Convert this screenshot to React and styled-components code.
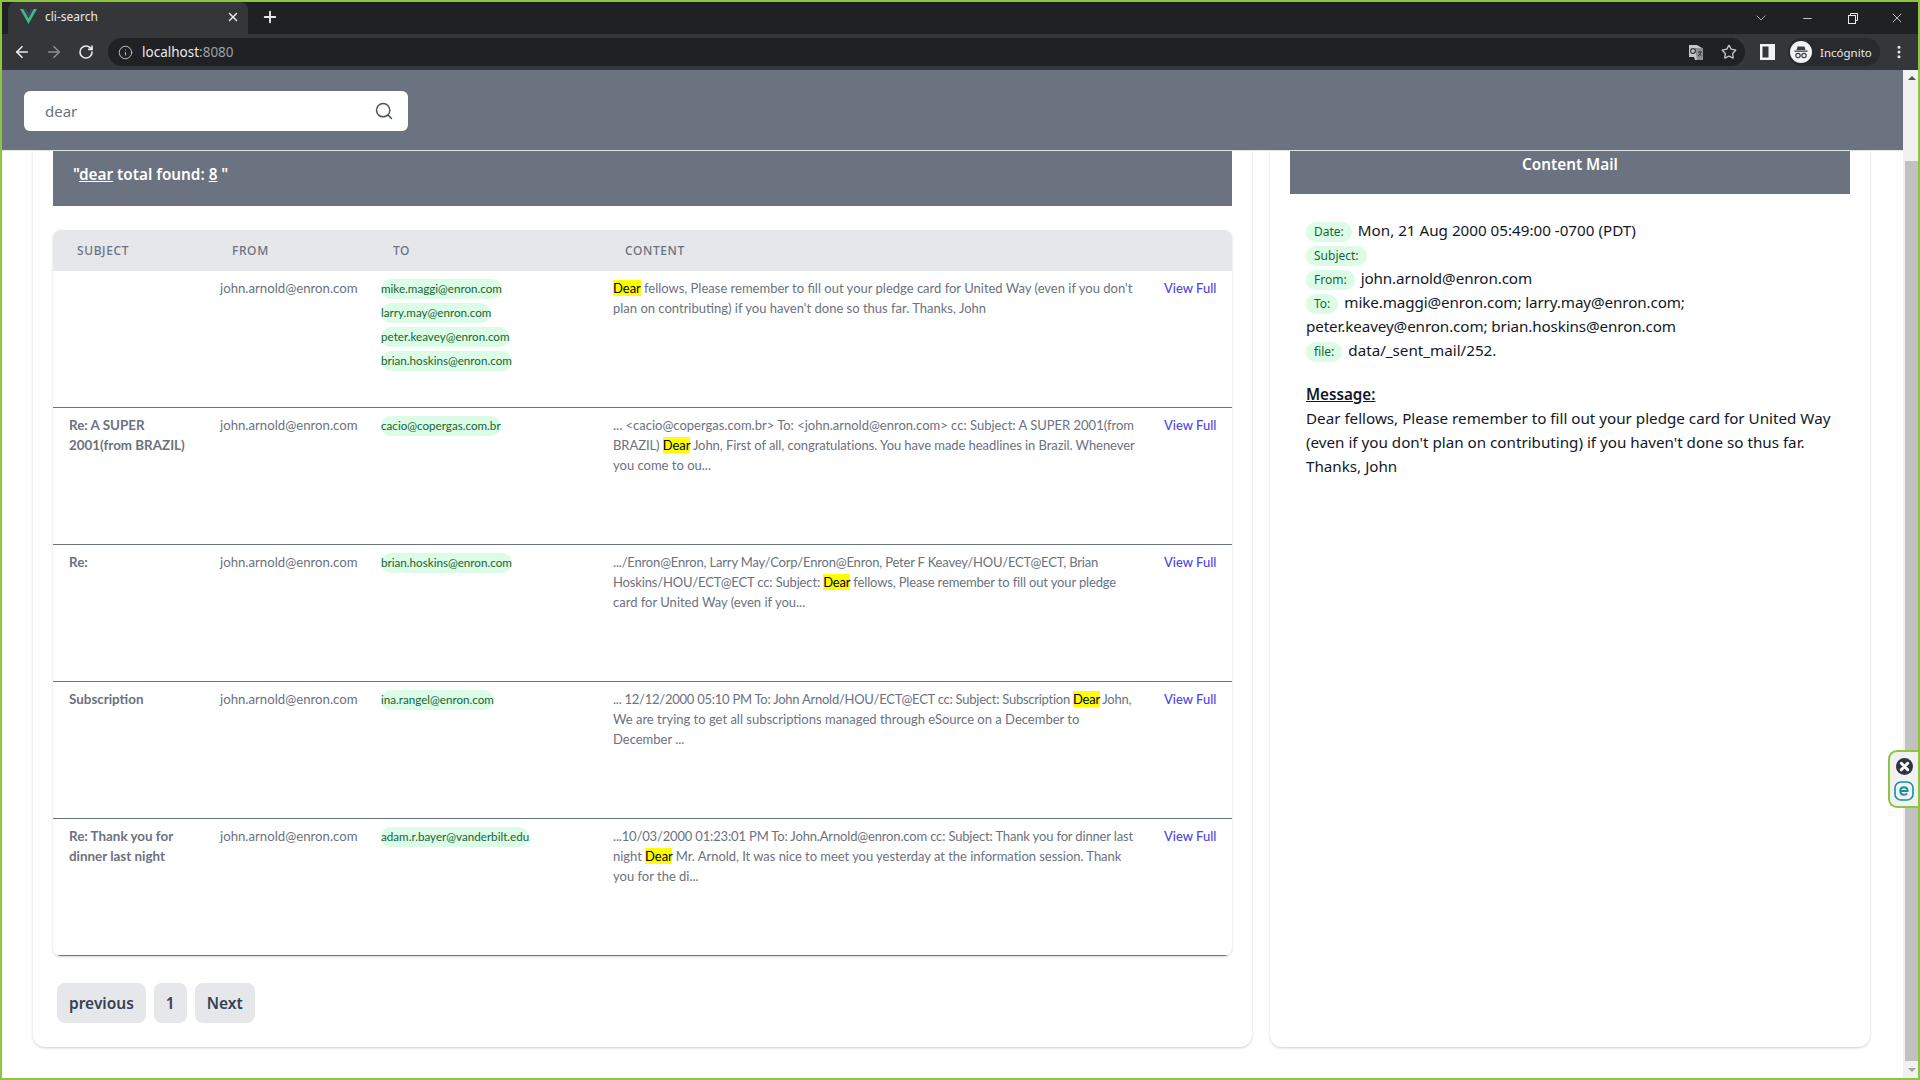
import React from "react";
import styled, { createGlobalStyle } from "styled-components";
import { ArrowLeft, ArrowRight, RotateCw, Info, Star, Search, X, Plus, ChevronDown, Minus, MoreVertical } from "lucide-react";

const FONT = `"Noto Sans", "Open Sans", "Liberation Sans", sans-serif`;
const NARROW = `Lato, "Noto Sans", "Liberation Sans", sans-serif`;
const COLUMNS = "155px 161px 232px 551px 80px";

const Global = createGlobalStyle`
  html, body { margin: 0; padding: 0; background: #fff; overflow: hidden; }
  * { box-sizing: border-box; }
`;

const Frame = styled.div`
  position: relative;
  width: 1920px;
  height: 1080px;
  border: 2px solid #8cc63f;
  display: flex;
  flex-direction: column;
  overflow: hidden;
  font-family: ${FONT};
  background: #fff;
`;

const TabStrip = styled.div`
  height: 32px;
  background: #202124;
  display: flex;
  align-items: stretch;
  padding-left: 6px;
  color: #e8eaed;
`;

const Tab = styled.div`
  width: 240px;
  background: #35363a;
  border-radius: 8px 8px 0 0;
  display: flex;
  align-items: center;
  padding: 0 8px 3px 12px;
  font-size: 12px;
`;

const TabTitle = styled.span`
  flex: 1;
  margin-left: 8px;
`;

const NewTab = styled.div`
  width: 44px;
  padding-bottom: 3px;
  display: flex;
  align-items: center;
  justify-content: center;
`;

const WindowControls = styled.div`
  margin-left: auto;
  display: flex;
  align-items: center;
`;

const WindowButton = styled.div`
  width: ${(p) => (p.$last ? 42 : 46)}px;
  height: 28px;
  display: flex;
  align-items: center;
  justify-content: center;
`;

const Toolbar = styled.div`
  height: 36px;
  background: #35363a;
  display: flex;
  align-items: center;
  padding-left: 4px;
  color: #e8eaed;
`;

const NavButton = styled.div`
  width: 32px;
  display: flex;
  justify-content: center;
  color: ${(p) => (p.$off ? "#8b8d90" : "#e8eaed")};
`;

const UrlBar = styled.div`
  width: 1637px;
  height: 28px;
  margin-left: 6px;
  background: #202124;
  border-radius: 14px;
  display: flex;
  align-items: center;
  padding-left: 10px;
  font-size: 13.5px;
`;

const Url = styled.span`
  margin-left: 9px;
  flex: 1;
`;

const Port = styled.span`
  color: #9aa0a6;
`;

const Toolicon = styled.div`
  width: 33px;
  margin-left: ${(p) => p.$gap || 0}px;
  display: flex;
  justify-content: center;
  color: #c4c7c5;
`;

const Profile = styled.div`
  margin-left: 4px;
  height: 28px;
  width: 92px;
  border-radius: 14px;
  background: #292a2d;
  display: flex;
  align-items: center;
  padding-left: 2px;
  font-size: 11.5px;
  gap: 8px;
`;

const Kebab = styled.div`
  margin-left: 11px;
  display: flex;
`;

const Main = styled.div`
  flex: 1;
  display: flex;
  min-height: 0;
`;

const Page = styled.div`
  flex: 1;
  display: flex;
  flex-direction: column;
  min-width: 0;
`;

const Header = styled.header`
  height: 81px;
  background: #6b7280;
  border-bottom: 1px solid #e5e7eb;
  padding: 21px 0 0 22px;
`;

const SearchBox = styled.div`
  width: 384px;
  height: 40px;
  background: #fff;
  border-radius: 6px;
  display: flex;
  align-items: center;
  padding: 0 14px 0 21px;
  color: #4b5563;
`;

const SearchInput = styled.input`
  flex: 1;
  min-width: 0;
  border: 0;
  outline: 0;
  background: transparent;
  padding: 0;
  font: 15px ${FONT};
  color: #6b7280;
`;

const Body = styled.div`
  flex: 1;
  display: flex;
  gap: 18px;
  padding: 0 0 31px 31px;
`;

const Card = styled.section`
  width: ${(p) => p.$width}px;
  padding: 0 20px;
  background: #fff;
  border-radius: 0 0 12px 12px;
  box-shadow: 0 1px 3px rgba(0, 0, 0, 0.14), 0 1px 2px rgba(0, 0, 0, 0.06);
`;

const Band = styled.div`
  height: ${(p) => p.$height}px;
  background: #6b7280;
  color: #fff;
  font-size: 15.3px;
  font-weight: 600;
  line-height: 24px;
  padding: ${(p) => (p.$center ? "1px 0 0" : "11px 20px 0")};
  text-align: ${(p) => (p.$center ? "center" : "left")};
`;

const Under = styled.span`
  text-decoration: underline;
`;

const Table = styled.div`
  margin-top: 24px;
  border-radius: 8px;
  box-shadow: 0 1px 3px rgba(0, 0, 0, 0.16);
  overflow: hidden;
`;

const HeadRow = styled.div`
  height: 41px;
  background: #e5e7eb;
  display: grid;
  grid-template-columns: ${COLUMNS};
  align-items: center;
`;

const HeadCell = styled.div`
  padding-left: 24px;
  font-size: 12px;
  font-weight: 500;
  letter-spacing: 0.05em;
  color: #6b7280;
  text-transform: uppercase;
`;

const Row = styled.div`
  height: 137px;
  display: grid;
  grid-template-columns: ${COLUMNS};
  align-content: start;
  padding-top: 7px;
  border-bottom: 1px solid #6b7280;
  font-family: ${NARROW};
  font-size: 13px;
  line-height: 20px;
  color: #6b7280;
`;

const Subject = styled.div`
  padding-left: 16px;
  font-size: 13.4px;
  font-weight: 700;
  white-space: nowrap;
`;

const Cell = styled.div`
  padding-left: 12px;
  white-space: nowrap;
`;

const Sender = styled(Cell)`
  font-size: 13.2px;
`;

const Recipients = styled(Cell)`
  display: flex;
  flex-direction: column;
  align-items: flex-start;
  gap: 4px;
  padding-top: 1px;
`;

const Line = styled.div`
  letter-spacing: ${(p) => p.$spacing || 0}px;
`;

const Chip = styled.span`
  display: inline-block;
  height: 20px;
  line-height: 20px;
  border-radius: 10px;
  background: #dcfce7;
  color: #166534;
  font-size: 11.65px;
`;

const Mark = styled.mark`
  background: #ffff00;
  color: #000;
`;

const ViewLink = styled.a`
  padding-left: 12px;
  color: #4f46e5;
  font-weight: 500;
  white-space: nowrap;
`;

const Pager = styled.nav`
  display: flex;
  gap: 8px;
  margin-top: 27px;
  padding-left: 4px;
`;

const PageButton = styled.button`
  height: 40px;
  padding: 0 12px;
  border: 0;
  border-radius: 8px;
  background: #e5e7eb;
  color: #374151;
  font: 600 15.5px ${FONT};
`;

const MailBody = styled.div`
  padding: 24px 16px 0;
  font-size: 15.2px;
  line-height: 24px;
  color: #111827;
`;

const Addresses = styled.span`
  letter-spacing: -0.1px;
`;

const MessageTitle = styled.div`
  margin-top: 20px;
  font-weight: 600;
  text-decoration: underline;
`;

const MailLabel = styled(Chip)`
  padding: 0 8px;
  margin-right: 6px;
  font-size: 12px;
  font-family: ${FONT};
`;

const Scrollbar = styled.div`
  width: 15px;
  background: #f1f1f1;
  display: flex;
  flex-direction: column;
  align-items: flex-end;
  justify-content: space-between;
  position: relative;
`;

const ScrollArrow = styled.div`
  width: 13px;
  height: 17px;
  display: flex;
  align-items: center;
  justify-content: center;
  &::after {
    content: "";
    border-left: 4px solid transparent;
    border-right: 4px solid transparent;
    ${(p) => (p.$down ? "border-top: 4px solid #a3a3a3;" : "border-bottom: 4px solid #505050;")}
  }
`;

const ScrollThumb = styled.div`
  width: 13px;
  height: 902px;
  margin-top: 74px;
  background: #c1c1c1;
`;

const Widget = styled.div`
  position: absolute;
  right: 0;
  top: 748px;
  width: 30px;
  height: 58px;
  background: #f1f1f1;
  border: 2px solid #8cc63f;
  border-right: 0;
  border-radius: 9px 0 0 9px;
  display: flex;
  flex-direction: column;
  align-items: center;
  justify-content: center;
  gap: 6px;
`;

// spacing: per line tweak, Lato runs wide on digits and capitals
const rows = [
  {
    subject: [],
    to: ["mike.maggi@enron.com", "larry.may@enron.com", "peter.keavey@enron.com", "brian.hoskins@enron.com"],
    content: [
      { text: [<Mark key="m">Dear</Mark>, " fellows, Please remember to fill out your pledge card for United Way (even if you don't"] },
      { text: ["plan on contributing) if you haven't done so thus far. Thanks, John"] },
    ],
  },
  {
    subject: ["Re: A SUPER", "2001(from BRAZIL)"],
    to: ["cacio@copergas.com.br"],
    content: [
      { text: ["... <cacio@copergas.com.br> To: <john.arnold@enron.com> cc: Subject: A SUPER 2001(from"] },
      { text: ["BRAZIL) ", <Mark key="m">Dear</Mark>, " John, First of all, congratulations. You have made headlines in Brazil. Whenever"], spacing: -0.07 },
      { text: ["you come to ou..."] },
    ],
  },
  {
    subject: ["Re:"],
    to: ["brian.hoskins@enron.com"],
    content: [
      { text: [".../Enron@Enron, Larry May/Corp/Enron@Enron, Peter F Keavey/HOU/ECT@ECT, Brian"], spacing: -0.18 },
      { text: ["Hoskins/HOU/ECT@ECT cc: Subject: ", <Mark key="m">Dear</Mark>, " fellows, Please remember to fill out your pledge"], spacing: -0.15 },
      { text: ["card for United Way (even if you..."] },
    ],
  },
  {
    subject: ["Subscription"],
    to: ["ina.rangel@enron.com"],
    content: [
      { text: ["... 12/12/2000 05:10 PM To: John Arnold/HOU/ECT@ECT cc: Subject: Subscription ", <Mark key="m">Dear</Mark>, " John,"], spacing: -0.25 },
      { text: ["We are trying to get all subscriptions managed through eSource on a December to"] },
      { text: ["December ..."] },
    ],
  },
  {
    subject: ["Re: Thank you for", "dinner last night"],
    to: ["adam.r.bayer@vanderbilt.edu"],
    content: [
      { text: ["...10/03/2000 01:23:01 PM To: John.Arnold@enron.com cc: Subject: Thank you for dinner last"], spacing: -0.16 },
      { text: ["night ", <Mark key="m">Dear</Mark>, " Mr. Arnold, It was nice to meet you yesterday at the information session. Thank"], spacing: -0.04 },
      { text: ["you for the di..."] },
    ],
  },
];

const VueLogo = () => (
  <svg width="17" height="15" viewBox="0 0 16 14">
    <path d="M0 0h3.2L8 8.6 12.8 0H16L8 14z" fill="#41b883" />
    <path d="M3.2 0h2.6L8 4 10.2 0h2.6L8 8.6z" fill="#35495e" />
  </svg>
);

const RestoreIcon = () => (
  <svg width="12" height="12" viewBox="0 0 12 12" fill="none" stroke="#e8eaed" strokeWidth="1">
    <rect x="1.5" y="3.5" width="7" height="8" />
    <path d="M3.5 3.5V1.5h7v7h-2" />
  </svg>
);

const TranslateIcon = () => (
  <svg width="16" height="17" viewBox="0 0 16 17">
    <path d="M1 1h8l5 3v12H7l-1-3H1z" fill="#c4c7c5" />
    <path d="M7 4h8v12H9z" fill="#8e9092" />
    <circle cx="5" cy="7" r="2.4" fill="none" stroke="#35363a" strokeWidth="1.2" />
    <path d="M10 8h4M12 7v1M13 8c-.4 2-1.6 3.4-3 4M10.8 9.5c.6 1 1.6 1.9 2.8 2.4" fill="none" stroke="#35363a" strokeWidth="1" />
  </svg>
);

const SidebarIcon = () => (
  <svg width="15" height="16" viewBox="0 0 15 16">
    <rect width="15" height="16" fill="#f1f3f4" />
    <rect x="2.5" y="2.5" width="6" height="11" fill="#35363a" />
  </svg>
);

const IncognitoIcon = () => (
  <svg width="22" height="22" viewBox="0 0 22 22">
    <circle cx="11" cy="11" r="11" fill="#f1f3f4" />
    <path d="M7.5 5.5h7l1 3.5h-9z" fill="#3c4043" />
    <rect x="4.5" y="9.5" width="13" height="1.3" fill="#3c4043" />
    <circle cx="8" cy="14.5" r="2.2" fill="none" stroke="#3c4043" strokeWidth="1.2" />
    <circle cx="14" cy="14.5" r="2.2" fill="none" stroke="#3c4043" strokeWidth="1.2" />
  </svg>
);

const CloseBadge = () => (
  <svg width="17" height="17" viewBox="0 0 17 17">
    <circle cx="8.5" cy="8.5" r="8.5" fill="#2f3440" />
    <path d="M5.3 5.3l6.4 6.4M11.7 5.3l-6.4 6.4" stroke="#fff" strokeWidth="3" strokeLinecap="round" />
  </svg>
);

const EsetBadge = () => (
  <svg width="20" height="20" viewBox="0 0 20 20">
    <rect x="1" y="1" width="18" height="18" rx="6" fill="none" stroke="#14909f" strokeWidth="1.6" />
    <path d="M6.4 10h7.2c0-2.4-1.5-3.8-3.6-3.8S6.300 7.800 6.300 10s1.500 3.800 3.700 3.800c1.300 0 2.400-.4 3.200-1.200" fill="none" stroke="#14909f" strokeWidth="2" />
  </svg>
);

const App = () => {
  return (
    <Frame>
      <Global />
      <TabStrip>
        <Tab>
          <VueLogo />
          <TabTitle>cli-search</TabTitle>
          <X size={14} strokeWidth={2.5} />
        </Tab>
        <NewTab>
          <Plus size={18} strokeWidth={2.5} />
        </NewTab>
        <WindowControls>
          <WindowButton>
            <ChevronDown size={16} strokeWidth={1} />
          </WindowButton>
          <WindowButton>
            <Minus size={13} strokeWidth={1.5} />
          </WindowButton>
          <WindowButton>
            <RestoreIcon />
          </WindowButton>
          <WindowButton $last>
            <X size={16} strokeWidth={1.2} />
          </WindowButton>
        </WindowControls>
      </TabStrip>
      <Toolbar>
        <NavButton>
          <ArrowLeft size={18} strokeWidth={2.2} />
        </NavButton>
        <NavButton $off>
          <ArrowRight size={18} strokeWidth={2.2} />
        </NavButton>
        <NavButton>
          <RotateCw size={16} strokeWidth={2.4} />
        </NavButton>
        <UrlBar>
          <Info size={15} strokeWidth={1.5} color="#c4c7c5" />
          <Url>
            localhost<Port>:8080</Port>
          </Url>
          <Toolicon>
            <TranslateIcon />
          </Toolicon>
          <Toolicon>
            <Star size={16} strokeWidth={2} />
          </Toolicon>
        </UrlBar>
        <Toolicon $gap={6}>
          <SidebarIcon />
        </Toolicon>
        <Profile>
          <IncognitoIcon />
          Incógnito
        </Profile>
        <Kebab>
          <MoreVertical size={16} strokeWidth={2.6} />
        </Kebab>
      </Toolbar>
      <Main>
        <Page>
          <Header>
            <SearchBox>
              <SearchInput readOnly value="dear" />
              <Search size={20} strokeWidth={1.8} />
            </SearchBox>
          </Header>
          <Body>
            <Card $width={1219}>
              <Band $height={55}>
                "<Under>dear</Under> total found: <Under>8</Under> "
              </Band>
              <Table>
                <HeadRow>
                  <HeadCell>Subject</HeadCell>
                  <HeadCell>From</HeadCell>
                  <HeadCell>To</HeadCell>
                  <HeadCell>Content</HeadCell>
                </HeadRow>
                {rows.map((row, index) => (
                  <Row key={index}>
                    <Subject>
                      {row.subject.map((line) => (
                        <div key={line}>{line}</div>
                      ))}
                    </Subject>
                    <Sender>john.arnold@enron.com</Sender>
                    <Recipients>
                      {row.to.map((address) => (
                        <Chip key={address}>{address}</Chip>
                      ))}
                    </Recipients>
                    <Cell>
                      {row.content.map((line, i) => (
                        <Line key={i} $spacing={line.spacing}>
                          {line.text}
                        </Line>
                      ))}
                    </Cell>
                    <ViewLink>View Full</ViewLink>
                  </Row>
                ))}
              </Table>
              <Pager>
                <PageButton>previous</PageButton>
                <PageButton>1</PageButton>
                <PageButton>Next</PageButton>
              </Pager>
            </Card>
            <Card $width={600}>
              <Band $height={43} $center>
                Content Mail
              </Band>
              <MailBody>
                <div>
                  <MailLabel>Date:</MailLabel>Mon, 21 Aug 2000 05:49:00 -0700 (PDT)
                </div>
                <div>
                  <MailLabel>Subject:</MailLabel>
                </div>
                <div>
                  <MailLabel>From:</MailLabel>
                  <Addresses>john.arnold@enron.com</Addresses>
                </div>
                <div>
                  <MailLabel>To:</MailLabel>
                  <Addresses>mike.maggi@enron.com; larry.may@enron.com; peter.keavey@enron.com; brian.hoskins@enron.com</Addresses>
                </div>
                <div>
                  <MailLabel>file:</MailLabel>data/_sent_mail/252.
                </div>
                <MessageTitle>Message:</MessageTitle>
                <div>
                  Dear fellows, Please remember to fill out your pledge card for United Way (even if you don't plan on contributing) if you haven't done so thus far. Thanks, John
                </div>
              </MailBody>
            </Card>
          </Body>
        </Page>
        <Scrollbar>
          <ScrollArrow />
          <ScrollThumb />
          <ScrollArrow $down />
        </Scrollbar>
      </Main>
      <Widget>
        <CloseBadge />
        <EsetBadge />
      </Widget>
    </Frame>
  );
};

export default App;
